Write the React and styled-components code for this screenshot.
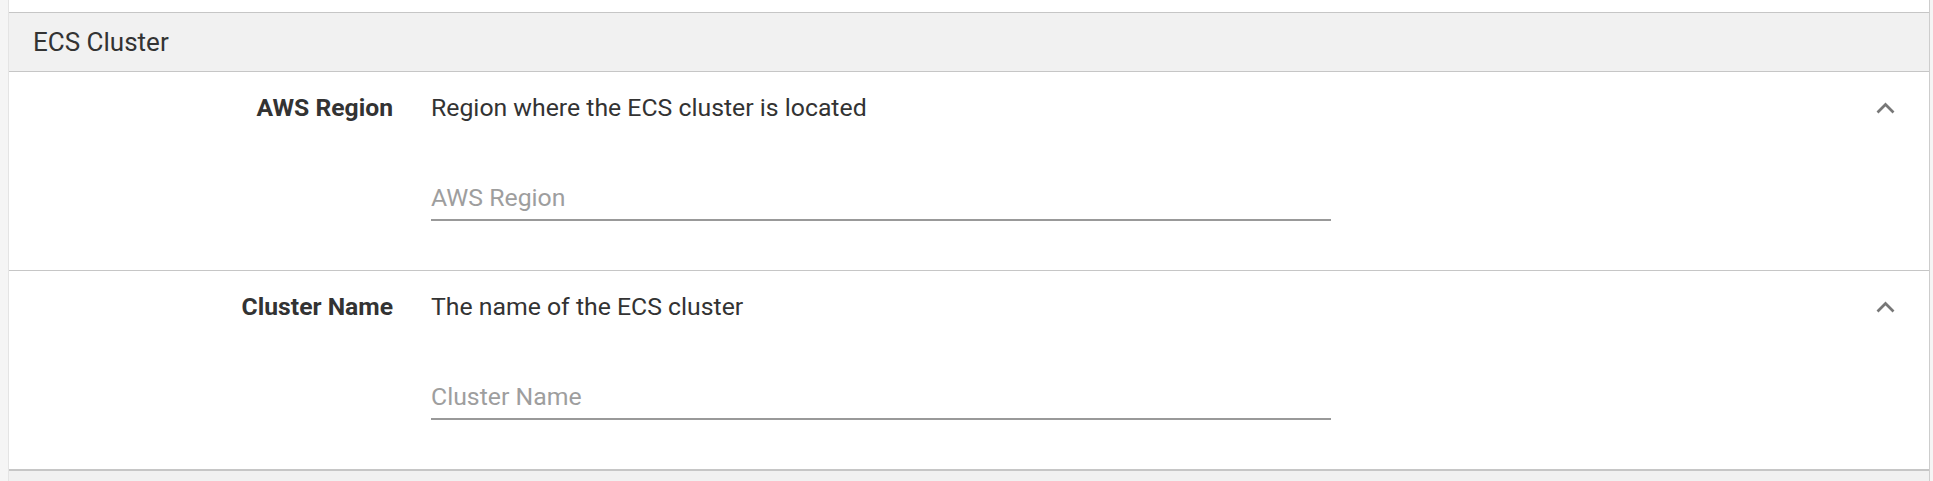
import React from "react";
import styled, { createGlobalStyle } from "styled-components";

const GlobalStyle = createGlobalStyle`
  html, body {
    margin: 0;
    padding: 0;
    background: #f5f5f5;
  }
  body {
    font-family: Roboto, "Noto Sans", "Liberation Sans", sans-serif;
    color: #333333;
  }
  * { box-sizing: border-box; }
`;

const Panel = styled.div`
  margin: 0 3px 0 8px;
  background: #ffffff;
  border-left: 1px solid #e4e4e4;
  border-right: 1px solid #cdcdcd;
`;

const PrevTail = styled.div`
  height: 12px;
  background: #ffffff;
`;

const SectionHeader = styled.div`
  height: 60px;
  display: flex;
  align-items: center;
  padding-left: 24px;
  background: #f1f1f1;
  border-top: 1px solid #c6c6c6;
  border-bottom: 1px solid #c6c6c6;
  font-size: 26px;
  font-weight: 400;
  color: #333333;
`;

const FieldRow = styled.div`
  display: grid;
  grid-template-columns: 384px 1fr auto;
  column-gap: 38px;
  padding: 18px 34px 49px 0;
  border-bottom: 1px solid #c6c6c6;
`;

const Label = styled.div`
  text-align: right;
  font-weight: 700;
  font-size: 24.7px;
  line-height: 36px;
  color: #333333;
`;

const Body = styled.div`
  display: flex;
  flex-direction: column;
`;

const Description = styled.div`
  font-size: 24.8px;
  line-height: 36px;
  color: #333333;
`;

const TextInput = styled.input`
  margin-top: 53px;
  width: 900px;
  height: 42px;
  padding: 0 0 4px 0;
  border: none;
  border-bottom: 2px solid #999999;
  outline: none;
  background: transparent;
  font-family: Roboto, "Noto Sans", "Liberation Sans", sans-serif;
  font-size: 24.8px;
  color: #333333;
  &::placeholder {
    color: #9e9e9e;
    opacity: 1;
  }
`;

const Toggle = styled.button`
  height: 36px;
  width: 19px;
  padding: 0;
  border: none;
  background: transparent;
  display: flex;
  align-items: center;
  justify-content: center;
  cursor: pointer;
`;

const ChevronUp = () => (
  <svg width="19" height="12" viewBox="0 0 19 12">
    <polyline
      points="1.5,10.5 9.5,2.5 17.5,10.5"
      fill="none"
      stroke="#777777"
      strokeWidth="2.7"
    />
  </svg>
);

const fields = [
  {
    label: "AWS Region",
    description: "Region where the ECS cluster is located",
  },
  {
    label: "Cluster Name",
    description: "The name of the ECS cluster",
  },
];

export default function App() {
  return (
    <>
      <GlobalStyle />
      <Panel>
        <PrevTail />
        <SectionHeader>ECS Cluster</SectionHeader>
        {fields.map((f) => (
          <FieldRow key={f.label}>
            <Label>{f.label}</Label>
            <Body>
              <Description>{f.description}</Description>
              <TextInput placeholder={f.label} />
            </Body>
            <Toggle aria-label="Collapse">
              <ChevronUp />
            </Toggle>
          </FieldRow>
        ))}
        <SectionHeader />
      </Panel>
    </>
  );
}
